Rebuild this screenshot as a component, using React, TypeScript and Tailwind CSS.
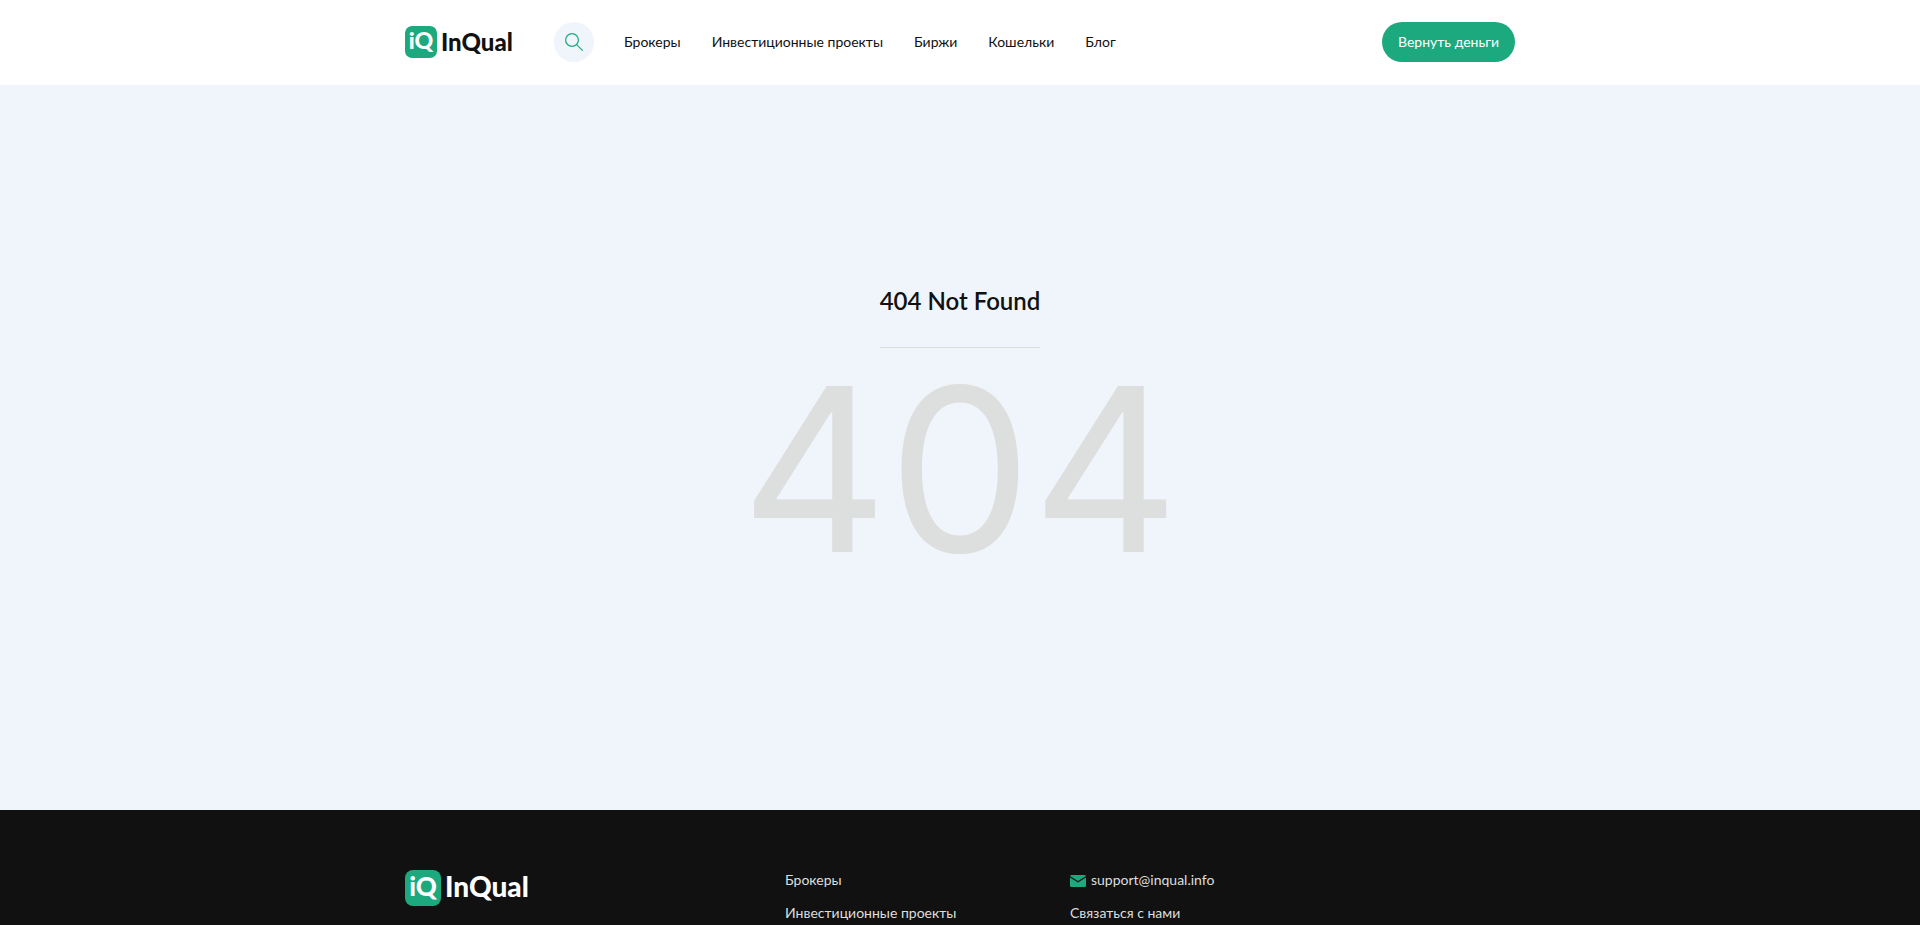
import clsx from "clsx";

const navLinks = [
  { title: "Брокеры", href: "#brokers" },
  { title: "Инвестиционные проекты", href: "#projects" },
  { title: "Биржи", href: "#exchanges" },
  { title: "Кошельки", href: "#wallets" },
  { title: "Блог", href: "#blog" },
];

const Logo = ({ large = false }: { large?: boolean }) => (
  <a
    href="/"
    className={clsx(
      "flex items-center gap-1 font-black leading-none",
      large ? "text-[28px] text-white" : "w-[109px] text-[24px] text-[#111]"
    )}
  >
    <svg
      viewBox="0 0 36 36"
      aria-hidden="true"
      className={clsx("shrink-0", large ? "size-9" : "size-8")}
    >
      <rect width="36" height="36" rx="8" fill="#1ca97d" />
      <text x="18" y="26" textAnchor="middle" fontSize="26" fontWeight="900" fill="#fff">
        iQ
      </text>
    </svg>
    <span className={clsx(large && "pb-1")}>InQual</span>
  </a>
);

const SearchIcon = () => (
  <svg viewBox="0 0 18 18" fill="none" stroke="#1ca97d" strokeWidth="1.2" strokeLinecap="round" className="size-[18px]">
    <circle cx="7" cy="7" r="6.4" />
    <path d="M11.6 11.6 17.4 17.4" />
  </svg>
);

const MailIcon = () => (
  <svg viewBox="0 0 16 12" aria-hidden="true" className="w-4 h-3 mt-[2px]">
    <rect width="16" height="12" rx="1.5" fill="#1ca97d" />
    <path d="M0 1.8 8 6.8 16 1.8" fill="none" stroke="#111" strokeWidth="1.1" />
  </svg>
);

const Header = () => (
  <header className="bg-white">
    <div className="flex items-center max-w-[1140px] h-[85px] mx-auto px-[15px] pb-px">
      <Logo />
      <button
        type="button"
        aria-label="Поиск"
        className="flex items-center justify-center size-10 ml-10 rounded-full bg-[#f0f5fc]"
      >
        <SearchIcon />
      </button>
      <nav className="flex gap-[31px] ml-[30px]">
        {navLinks.map((link) => (
          <a key={link.href} href={link.href} className="hover:text-[#1ca97d]">
            {link.title}
          </a>
        ))}
      </nav>
      <button type="button" className="h-10 ml-auto px-4 rounded-full bg-[#1ca97d] text-white">
        Вернуть деньги
      </button>
    </div>
  </header>
);

const Footer = () => (
  <footer className="grow bg-[#111] text-[#dddfde]">
    <div className="grid grid-cols-12 gap-x-[30px] max-w-[1140px] mx-auto px-[15px] pt-[60px]">
      <div className="col-span-4">
        <Logo large />
      </div>
      <ul className="col-span-3 flex flex-col gap-[13px]">
        {navLinks.slice(0, 2).map((link) => (
          <li key={link.href}>
            <a href={link.href}>{link.title}</a>
          </li>
        ))}
      </ul>
      <ul className="col-span-5 flex flex-col gap-[13px]">
        <li>
          <a href="mailto:support@inqual.info" className="flex items-center gap-[5px]">
            <MailIcon />
            support@inqual.info
          </a>
        </li>
        <li>
          <a href="#contacts">Связаться с нами</a>
        </li>
      </ul>
    </div>
  </footer>
);

export default function App() {
  return (
    <div className="flex flex-col min-h-screen font-['Lato','Open_Sans',sans-serif] text-[14px] leading-5 text-[#111]">
      <Header />
      <main className="flex flex-col items-center pt-[200px] pb-[220px] bg-[#f0f5fc]">
        <h1 className="pb-[30px] border-b border-[#dddfde] text-[24px] leading-8 font-semibold">
          404 Not Found
        </h1>
        <p className="font-['Inter',sans-serif] text-[228px] leading-[242px] text-[#dddfde]">404</p>
      </main>
      <Footer />
    </div>
  );
}
